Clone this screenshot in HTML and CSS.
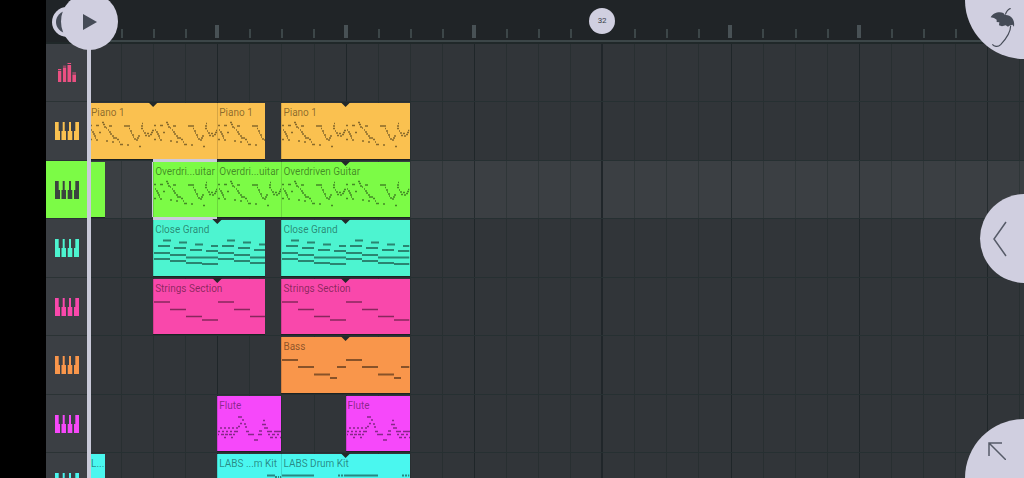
FILE: index.html
```
<!DOCTYPE html>
<html lang="en">
<head>
<meta charset="utf-8">
<meta name="viewport" content="width=device-width, initial-scale=1">
<title>Playlist</title>
<link rel="stylesheet" href="styles.css">
</head>
<body>
<svg class="defs" aria-hidden="true">
  <defs>
    <symbol id="keys" viewBox="0 0 24 18"><path d="M0 0H3.7V9H5V18H0ZM7.7 0H9.7V9H11V18H6.5V9H7.7ZM14 0H16V9H17.3V18H12.7V9H14ZM20.3 0H24V18H19V9H20.3Z" fill="currentColor"/></symbol>
    <pattern id="riff" width="64" height="56" patternUnits="userSpaceOnUse"><path stroke="#000" stroke-width="1.5" d="M0 21.500h2M6 21.500h3M1 26h1M2 28h2M3 30h2M4 32h2M5 34h1M6 36h2M0 35.500h2M9 28.500h2M12 18.500h2M13 20.500h2M14 23h2M16 24h1M19 22h3M16 37h2M18 26h1M19 28h2M20 30h2M22 32h2M23 34h4M27 35.500h2M29 38h1M30 40.500h3M22 38h2M37 41h2M34 22h6M39 24.500h1M40 27h2M41 29h1M42 31h2M43 33h1M44 35h2M46 36h2M47 34h2M48 32h2M49 42.500h2M52 19.500h1M51 22h2M51 24.500h2M53 27h1M54 29h2M55 31.500h2M57 29.500h2M58 32h2M60 30.500h2M61 28.500h2M62 26.500h2"/></pattern>
    <pattern id="chords" width="64" height="56" patternUnits="userSpaceOnUse"><path stroke="#000" stroke-width="1.8" d="M9 19.500h8M4 25h12M25 21.500h8M20 27h12M41 23.500h8M36 29h12M57 25h7M52 30h12M0 32h16M16 34h16M32 36.500h32M0 38h16M16 40h16M32 42h16M48 43h16"/></pattern>
    <pattern id="strings" width="64" height="56" patternUnits="userSpaceOnUse"><path stroke="#000" stroke-width="1.5" d="M0 22h16M16 29.500h16M32 36.500h16M48 40h16"/></pattern>
    <pattern id="bass" width="64" height="56" patternUnits="userSpaceOnUse"><path stroke="#000" stroke-width="1.8" d="M0 22h16M16 29h16M32 36.500h16M48 40h7M55 29h9"/></pattern>
    <pattern id="flute" width="64" height="56" patternUnits="userSpaceOnUse"><path stroke="#000" stroke-width="1.6" d="M20 20h4M24 23h2M22 26.500h2M26 27h2M20 29.500h2M27 30h2M2 31h2M6 31h2M10 31h2M14 31h2M18 31h2M0 34.500h2M4 34.500h2M8 34.500h2M12 34.500h2M16 34.500h4M28 34.500h3M0 37.500h1M3 37.500h3M7 37.500h3M11 37.500h3M15 37.500h2M30 37.500h6M6 40.500h2M13 40.500h2M36 43h4M40 37.500h4M41 34h3M44 27.500h4M45 23.500h2M46 31h4M49 34.500h5M50 37.500h2M56 34.500h5M54 37.500h3M52 40.500h3M57 40.500h2M59 37.500h2M61 34.500h3M62 40.500h2"/></pattern>
    <pattern id="drums" width="64" height="56" patternUnits="userSpaceOnUse"><path stroke="#000" stroke-width="1.8" d="M0 20.500h32M56 20.500h2M59 20.500h2M62 20.500h2"/></pattern>
    <pattern id="fill" width="64" height="56" patternUnits="userSpaceOnUse"><path stroke="#000" stroke-width="1.8" d="M49 20.500h8M57 22h2M60 22h1M62 22h2"/></pattern>
  </defs>
</svg>
<div class="app">
  <header class="ruler">
    <div class="bars ticks"><i></i><i></i><i></i><i></i><i></i><i></i><i></i><i></i><i></i><i></i><i></i><i></i><i></i><i></i><i></i><i></i><b class="bar-marker"><span>32</span></b><i></i><i></i><i></i><i></i><i></i><i></i><i></i><i></i><i></i><i></i><i></i><i></i><i></i></div>
  </header>
  <main class="tracks">
    <div class="bars gridlines"><i></i><i></i><i></i><i></i><i></i><i></i><i></i><i></i><i></i><i></i><i></i><i></i><i></i><i></i><i></i><i></i><i></i><i></i><i></i><i></i><i></i><i></i><i></i><i></i><i></i><i></i><i></i><i></i><i></i><i></i></div>

    <section class="track mixer">
      <button class="head" aria-label="Mixer"><svg class="eq" viewBox="0 0 55 58"><path fill="currentColor" d="M0 24h10v34H0ZM15 14h10v44H15ZM29 6h11v52H29ZM44 35h11v23H44ZM0 18h10v3H0ZM15 8h10v3H15ZM29 0h11v3H29ZM44 29h11v3H44Z"/></svg></button>
      <div class="lane"></div>
    </section>

    <section class="track piano">
      <button class="head" aria-label="Piano 1"><svg class="keys"><use href="#keys"/></svg></button>
      <div class="lane">
        <article class="clip at-0 len-8"><span>Piano 1</span><svg><rect width="100%" height="100%" fill="url(#riff)"/></svg></article>
        <article class="clip at-8 len-3"><span>Piano 1</span><svg><rect width="100%" height="100%" fill="url(#riff)"/></svg></article>
        <article class="clip at-12 len-8"><span>Piano 1</span><svg><rect width="100%" height="100%" fill="url(#riff)"/></svg></article>
        <i class="loop at-4"></i><i class="loop at-16"></i>
      </div>
    </section>

    <section class="track guitar selected">
      <button class="head" aria-label="Overdriven Guitar"><svg class="keys"><use href="#keys"/></svg></button>
      <div class="lane">
        <article class="clip at-0 len-1"></article>
        <article class="clip at-4 len-4 picked"><span>Overdri...uitar</span><svg><rect width="100%" height="100%" fill="url(#riff)"/></svg></article>
        <article class="clip at-8 len-4"><span>Overdri...uitar</span><svg><rect width="100%" height="100%" fill="url(#riff)"/></svg></article>
        <article class="clip at-12 len-8"><span>Overdriven Guitar</span><svg><rect width="100%" height="100%" fill="url(#riff)"/></svg></article>
        <i class="loop at-16"></i>
      </div>
    </section>

    <section class="track grand">
      <button class="head" aria-label="Close Grand"><svg class="keys"><use href="#keys"/></svg></button>
      <div class="lane">
        <article class="clip at-4 len-7"><span>Close Grand</span><svg><rect width="100%" height="100%" fill="url(#chords)"/></svg></article>
        <article class="clip at-12 len-8"><span>Close Grand</span><svg><rect width="100%" height="100%" fill="url(#chords)"/></svg></article>
        <i class="loop at-8"></i><i class="loop at-16"></i>
      </div>
    </section>

    <section class="track strings">
      <button class="head" aria-label="Strings Section"><svg class="keys"><use href="#keys"/></svg></button>
      <div class="lane">
        <article class="clip at-4 len-7"><span>Strings Section</span><svg><rect width="100%" height="100%" fill="url(#strings)"/></svg></article>
        <article class="clip at-12 len-8"><span>Strings Section</span><svg><rect width="100%" height="100%" fill="url(#strings)"/></svg></article>
        <i class="loop at-8"></i><i class="loop at-16"></i>
      </div>
    </section>

    <section class="track bass">
      <button class="head" aria-label="Bass"><svg class="keys"><use href="#keys"/></svg></button>
      <div class="lane">
        <article class="clip at-12 len-8"><span>Bass</span><svg><rect width="100%" height="100%" fill="url(#bass)"/></svg></article>
        <i class="loop at-16"></i>
      </div>
    </section>

    <section class="track flute">
      <button class="head" aria-label="Flute"><svg class="keys"><use href="#keys"/></svg></button>
      <div class="lane">
        <article class="clip at-8 len-4"><span>Flute</span><svg><rect width="100%" height="100%" fill="url(#flute)"/></svg></article>
        <article class="clip at-16 len-4"><span>Flute</span><svg><rect width="100%" height="100%" fill="url(#flute)"/></svg></article>
      </div>
    </section>

    <section class="track drums">
      <button class="head" aria-label="LABS Drum Kit"><svg class="keys"><use href="#keys"/></svg></button>
      <div class="lane">
        <article class="clip at-0 len-1"><span>L...</span></article>
        <article class="clip at-8 len-4"><span>LABS ...m Kit</span><svg><rect width="100%" height="100%" fill="url(#fill)"/></svg></article>
        <article class="clip at-12 len-8"><span>LABS Drum Kit</span><svg><rect width="100%" height="100%" fill="url(#drums)"/></svg></article>
        <i class="loop at-16"></i>
      </div>
    </section>
  </main>

  <div class="playhead"></div>
  <button class="round record" aria-label="Record"><i></i></button>
  <button class="round play" aria-label="Play"><svg viewBox="0 0 14 16"><path d="M0 0 14 8 0 16Z" fill="currentColor"/></svg></button>
  <button class="round menu" aria-label="Menu"><svg viewBox="150 24 78 120"><path fill="currentColor" d="M152 52C158 39 178 33 190 39L195 45C209 43 226 56 222 80L217 74 208 77 204 80 197 76 186 79 177 76 178 67 170 66 170 59 162 54Z"/><path fill="none" stroke="currentColor" stroke-width="3.500" d="M212 25C203 28 199 34 196 44M212 77C212 98 193 122 182 134C173 143 162 139 157 133"/></svg></button>
  <button class="round drawer" aria-label="Open panel"><svg viewBox="0 0 14 36"><path d="M13 1 1 18 13 35" fill="none" stroke="#565b68" stroke-width="1.500"/></svg></button>
  <button class="round tools" aria-label="Tools"><svg viewBox="0 0 18 18"><path d="M18 18 1 1M1 14V1H14" fill="none" stroke="#565b68" stroke-width="1.500"/></svg></button>
</div>
</body>
</html>
```
FILE: styles.css
```
* { box-sizing: border-box; }

body {
  margin: 0;
  background: #000;
  font-family: Roboto, "Liberation Sans", sans-serif;
}

button {
  border: 0;
  padding: 0;
  font: inherit;
  cursor: pointer;
}

.defs { position: absolute; width: 0; height: 0; }

.app {
  position: relative;
  height: 100vh;
  padding-left: 46px;
  overflow: hidden;
}

/* Each bar is one column; the last one runs off the right edge. */
.bars {
  display: grid;
  grid-template-columns: repeat(30, minmax(0, 1fr));
  width: 102.9%;
}

/* Ruler */
.ruler {
  height: 44px;
  padding-left: 43px;
  background: #202427;
  border-bottom: 2px solid #202829;
}
.ticks {
  height: 42px;
  padding-bottom: 2px;
  border-bottom: 2px solid #3c4648;
  align-items: end;
}
.ticks i {
  width: 2px;
  height: 9px;
  background: #3c4648;
}
.ticks i:nth-child(4n + 1) {
  width: 4px;
  height: 13px;
  margin-left: -2px;
  background: #485155;
}
.bar-marker {
  width: 26px;
  height: 26px;
  margin: 0 0 4px -13px;
  border-radius: 50%;
  background: #d0cfe0;
  color: #3b414a;
  display: grid;
  place-items: center;
  font-size: 8px;
  line-height: 8px;
  font-weight: 400;
}

/* Tracks */
.tracks { position: relative; }
.gridlines {
  position: absolute;
  top: 0;
  bottom: 0;
  left: 43px;
  width: calc(102.9% - 44px);
}
.gridlines i { border-left: 1px solid rgb(20 32 32 / 30%); }
.gridlines i:nth-child(4n + 1) { border-left-color: rgb(14 24 26 / 50%); }
.gridlines i:nth-child(17) { border-left: 2px solid #20262a; margin-left: -1px; }

.track {
  --tint: #7cfb46;
  display: grid;
  grid-template-columns: 43px minmax(0, 1fr);
  height: 58px;
  background: #313539;
}
.track:nth-of-type(even) { height: 59px; }
.selected { background: #3b3f43; }
.piano { --tint: #fac150; }
.grand { --tint: #4df4d0; }
.strings { --tint: #f948ab; }
.bass { --tint: #f9964b; }
.flute { --tint: #f648fa; }
.drums { --tint: #4af7ef; }
.mixer { --tint: #ea5082; }

.head {
  display: grid;
  place-items: center;
  padding-right: 2px;
  background: #3b3f44;
  color: var(--tint);
  border-bottom: 1px solid #2b3335;
}
.selected .head { background: var(--tint); color: #3b443f; }
.keys { width: 24px; height: 18px; }
.eq { width: 18px; height: 19px; }

.lane {
  position: relative;
  display: grid;
  grid-template-columns: repeat(60, minmax(0, 1fr));
  width: 102.9%;
  border-bottom: 1px solid #263032;
}
.lane > * { grid-row: 1; }

.clip {
  position: relative;
  margin: 1px 0;
  background: var(--tint);
  border-left: 1px solid rgb(0 0 0 / 14%);
  box-shadow: 0 1px #1c2222;
  overflow: hidden;
  color: rgb(0 0 0 / 46%);
  font-size: 10px;
  line-height: 12px;
  white-space: nowrap;
}
.clip span { display: block; padding: 4px 0 0 1px; }
.clip svg {
  position: absolute;
  inset: 1px 0 0 0;
  width: 100%;
  height: 100%;
  opacity: .45;
}
.picked { box-shadow: 0 -3px #cccbdb, 0 3px #cccbdb, -1px 0 #cccbdb; z-index: 1; }

.loop {
  z-index: 2;
  width: 10px;
  height: 5px;
  margin-left: -5px;
  background: #23292a;
  clip-path: polygon(0 0, 100% 0, 50% 100%);
}

.at-0 { grid-column-start: 1; }
.at-4 { grid-column-start: 5; }
.at-8 { grid-column-start: 9; }
.at-12 { grid-column-start: 13; }
.at-16 { grid-column-start: 17; }
.len-1 { grid-column-end: span 1; }
.len-3 { grid-column-end: span 3; }
.len-4 { grid-column-end: span 4; }
.len-7 { grid-column-end: span 7; }
.len-8 { grid-column-end: span 8; }

/* Floating controls over the playlist */
.playhead {
  position: absolute;
  top: 0;
  bottom: 0;
  left: 87px;
  width: 4px;
  z-index: 3;
  background: #c9cad9;
}
.round {
  position: absolute;
  z-index: 4;
  display: grid;
  border-radius: 50%;
  background: #d0cfe0;
  color: #454b57;
}
.record {
  left: 52px;
  top: 7px;
  width: 30px;
  height: 30px;
  place-items: center;
}
.record i { width: 22px; height: 22px; border-radius: 50%; background: #454b57; }
.play {
  left: 61px;
  top: -7px;
  width: 57px;
  height: 57px;
  place-items: center;
}
.play svg { width: 14px; height: 16px; }
.menu {
  right: -59px;
  top: -59px;
  width: 118px;
  height: 118px;
  place-items: end start;
  padding: 0 0 11px 25px;
}
.menu svg { width: 26px; height: 40px; }
.drawer {
  right: -45px;
  top: calc(50% - 45px);
  width: 89px;
  height: 89px;
  place-items: center start;
  padding-left: 13px;
}
.drawer svg { width: 14px; height: 36px; }
.tools {
  right: -59px;
  bottom: -59px;
  width: 118px;
  height: 118px;
  place-items: start;
  padding: 23px 0 0 23px;
}
.tools svg { width: 18px; height: 18px; }
```
